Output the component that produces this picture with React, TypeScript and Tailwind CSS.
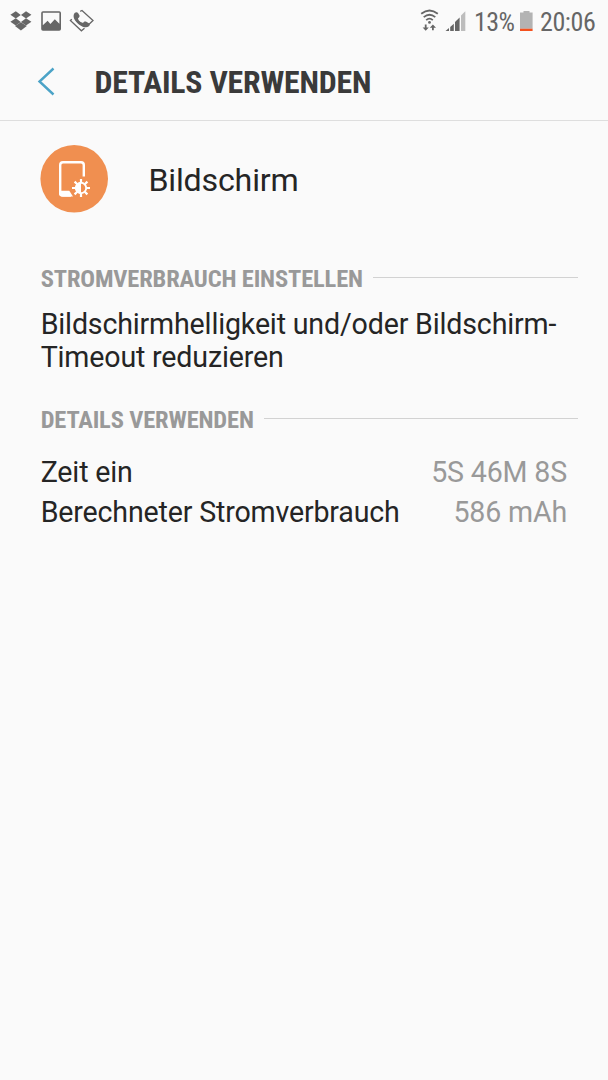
import React from "react";

const CONDENSED = "font-['Roboto_Condensed','Roboto',sans-serif]";

function StatusBar() {
  return (
    <div className="h-11 flex items-center text-[#666666]">
      {/* notification icons */}
      <svg width="100" height="44" viewBox="0 0 100 44" fill="currentColor">
        {/* dropbox */}
        <path d="M10.4 14.8L15.8 11.2L20.8 15L15.8 18.4Z" />
        <path d="M31.4 14.8L26 11.2L21 15L26 18.4Z" />
        <path d="M10.4 21.7L15.8 18.2L20.8 21.9L15.8 25.4Z" />
        <path d="M31.4 21.7L26 18.2L21 21.9L26 25.4Z" />
        <path d="M15 26L20.9 22.3L26.8 26L20.9 30.5Z" />
        {/* gallery */}
        <path
          fillRule="evenodd"
          d="M43 11.2H59.2Q61 11.2 61 13V29Q61 30.8 59.2 30.8H43Q41.2 30.8 41.2 29V13Q41.2 11.2 43 11.2ZM42.8 12.8V25.2L47.6 20.8L50.4 23.9L54.8 19.2L59.4 23.8V12.8Z"
        />
        {/* call */}
        <path
          d="M80.2 11.3L82 10.5L93 20.5L88.5 24.7M71.8 19.2L70.4 20.6L81.4 30.8L84.5 28.3"
          fill="none"
          stroke="currentColor"
          strokeWidth="1.3"
        />
        <path d="M74.6 13.1C75.8 11.9 77.3 12 78 13L79.4 15.3C80 16.4 79 17.7 78 18.3C78.2 20.6 80.8 22.8 83.2 22.8C83.9 21.6 85.2 21.1 86.3 21.8L88.9 23.2C90 24.1 90 25.1 88.9 26.2C86.8 28.2 83 27.5 79.2 24.8C74.4 21.3 72.1 16.4 74.6 13.1Z" />
      </svg>

      <svg
        className="ml-auto"
        width="50"
        height="44"
        viewBox="0 0 50 44"
        fill="currentColor"
      >
        {/* wifi */}
        <g fill="none" stroke="currentColor" strokeWidth="1.8">
          <path d="M2.2 13.8Q10.5 7.2 18.8 13.8" />
          <path d="M4.7 17.1Q10.5 12.3 16.3 17.1" />
          <path d="M7.2 20.1Q10.5 17.2 13.8 20.1" />
        </g>
        <circle cx="10.5" cy="22.4" r="1.4" />
        <path d="M5.8 24.5H7.6V27.4H9.8L6.7 30.7L3.6 27.4H5.8Z" />
        <path d="M13 30.3H14.8V27.8H17L13.9 24.5L10.8 27.8H13Z" />
        {/* signal */}
        <path d="M26.5 31L30 28V31Z" />
        <path d="M31.2 27L34.8 23.8V31H31.2Z" />
        <path d="M36 22L40.6 17.5V31H36Z" />
        <path d="M42 15.6L46.3 11.2V31H42Z" fill="#bdbdbd" />
      </svg>
      <span
        className={`ml-[5px] w-[42px] text-[26px] tracking-[-0.6px] whitespace-nowrap ${CONDENSED}`}
      >
        13%
      </span>
      <svg className="ml-[3px]" width="16" height="44" viewBox="0 0 16 44">
        <path d="M4.5 11H10.5V12.5H13.6V28.7H1V12.5H4.5Z" fill="#b3b3b3" />
        <path d="M1 28.7H13.6V31H1Z" fill="#f4511e" />
      </svg>
      <span
        className={`ml-[5px] w-[68px] text-[26px] tracking-[-0.4px] whitespace-nowrap ${CONDENSED}`}
      >
        20:06
      </span>
    </div>
  );
}

function SectionTitle({ children }: { children: React.ReactNode }) {
  return (
    <div className="flex h-8 items-center">
      <h2
        className={`text-[24.5px] leading-8 font-bold tracking-[-0.16px] whitespace-nowrap text-[#999999] ${CONDENSED}`}
      >
        {children}
      </h2>
      <div className="ml-2.5 mb-[3px] h-px flex-1 bg-[#d2d2d2]" />
    </div>
  );
}

export default function App() {
  return (
    <div className="h-[1080px] w-[608px] overflow-hidden bg-[#fafafa] font-['Roboto',sans-serif] text-[#252525]">
      <StatusBar />

      <header className="flex h-[77px] items-center border-b border-[#dedede] pl-[37px]">
        <svg width="18" height="30" viewBox="0 0 18 30" fill="none">
          <path d="M16.5 1.5L2.5 14.5L16.5 27.5" stroke="#4ba3c7" strokeWidth="2.4" />
        </svg>
        <h1
          className={`ml-[39.5px] pt-0.5 text-[31.8px] font-bold tracking-[-0.2px] text-[#3a3a3a] ${CONDENSED}`}
        >
          DETAILS VERWENDEN
        </h1>
      </header>

      <main className="pl-10">
        <div className="mt-6 flex h-[68px] items-center">
          <svg width="68" height="68" viewBox="0 0 68 68">
            <circle cx="34.2" cy="33.8" r="33.8" fill="#f08f50" />
            <path
              d="M43.8 31.5V20Q43.8 17.2 41 17.2H23Q20.2 17.2 20.2 20V47.5Q20.2 50.5 23 50.5H31"
              fill="none"
              stroke="#fff"
              strokeWidth="2.4"
            />
            <path d="M19 45.8H29.3L33 51.6H22Q19 51.6 19 48.6Z" fill="#fff" />
            <g stroke="#fff" strokeWidth="2.2">
              <path d="M41 34V38M41 48V52M32 43H36M46 43H50M34.6 36.6L37.5 39.5M44.5 46.5L47.4 49.4M47.4 36.6L44.5 39.5M37.5 46.5L34.6 49.4" />
            </g>
            <circle cx="41" cy="43" r="5.2" fill="#f08f50" stroke="#fff" strokeWidth="1.9" />
            <path d="M41 37.2A5.8 5.8 0 0 0 41 48.8Z" fill="#fff" />
          </svg>
          <span className="ml-[40.5px] pt-0.5 text-[32.2px] tracking-[-0.2px]">Bildschirm</span>
        </div>

        <section className="mt-[50px] pr-[30px] pl-[0.7px]">
          <SectionTitle>STROMVERBRAUCH EINSTELLEN</SectionTitle>
          <p className="mt-[13px] text-[28.6px] leading-[32.5px] tracking-[-0.17px] whitespace-nowrap">
            Bildschirmhelligkeit und/oder Bildschirm-
            <br />
            Timeout reduzieren
          </p>
        </section>

        <section className="mt-[31px] pr-[30px] pl-[0.7px]">
          <SectionTitle>DETAILS VERWENDEN</SectionTitle>
          <dl className="mt-4 pr-[11px] text-[28.6px] leading-10 tracking-[-0.17px]">
            <div className="flex justify-between">
              <dt>Zeit ein</dt>
              <dd className="text-[#999999]">5S 46M 8S</dd>
            </div>
            <div className="flex justify-between">
              <dt>Berechneter Stromverbrauch</dt>
              <dd className="text-[#999999]">586 mAh</dd>
            </div>
          </dl>
        </section>
      </main>
    </div>
  );
}
